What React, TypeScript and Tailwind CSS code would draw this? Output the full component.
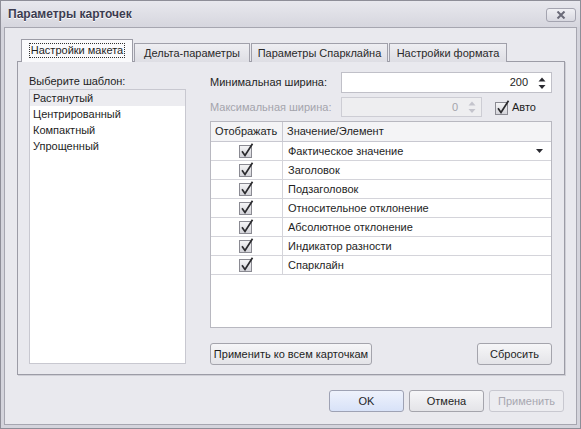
import React from 'react'

const font = { fontFamily: '"Liberation Sans", Arial, sans-serif' }

function CheckMark({ id }: { id: string }) {
  return (
    <svg width="15" height="15" viewBox="0 0 15 15">
      <defs>
        <linearGradient id={id} x1="0" y1="0" x2="0" y2="1">
          <stop offset="0" stopColor="#f6f6f7" />
          <stop offset="1" stopColor="#d2d2d8" />
        </linearGradient>
      </defs>
      <rect x="0.5" y="2.5" width="12" height="12" fill={`url(#${id})`} stroke="#8a8a92" />
      <path d="M3 8.3 L6 12.5 L13.5 0.8" fill="none" stroke="#2b2b2e" strokeWidth="1.7" />
    </svg>
  )
}

function Spinner({ color }: { color: string }) {
  return (
    <svg width="8" height="14" viewBox="0 0 8 14">
      <path d="M4 1.5 L7.5 5.5 H0.5 Z" fill={color} />
      <path d="M0.5 9 H7.5 L4 13 Z" fill={color} />
    </svg>
  )
}

const rows = [
  'Фактическое значение',
  'Заголовок',
  'Подзаголовок',
  'Относительное отклонение',
  'Абсолютное отклонение',
  'Индикатор разности',
  'Спарклайн',
]

const templates = ['Растянутый', 'Центрированный', 'Компактный', 'Упрощенный']

function Button({ children, className = '' }: { children: React.ReactNode; className?: string }) {
  return (
    <div
      className={`h-[22px] flex items-center justify-center rounded-[3px] border border-[#a4a4ac] bg-gradient-to-b from-[#f6f6f8] to-[#e4e4e8] text-[11px] text-[#1e1e1e] ${className}`}
    >
      {children}
    </div>
  )
}

export default function App() {
  return (
    <div
      className="w-[581px] h-[429px] flex flex-col bg-[#d4d4dc] border border-[#8e8e98] overflow-hidden"
      style={font}
    >
      {/* title bar */}
      <div className="h-[26px] flex items-center justify-between pl-[7px] pr-[4px] bg-gradient-to-b from-[#e8e8ee] to-[#d6d6de]">
        <span className="text-[12px] font-bold text-[#3c3c50] [text-shadow:0_1px_0_#ffffff]">Параметры карточек</span>
        <div className="w-[30px] h-[14px] mt-[1px] rounded-[3px] border border-[#a4a4b0] bg-gradient-to-b from-[#f0f0f4] to-[#d8d8e0] flex items-center justify-center">
          <svg width="10" height="8" viewBox="0 0 10 8">
            <path d="M1.5 0.5 L8.5 7.5 M8.5 0.5 L1.5 7.5" stroke="#6a6a78" strokeWidth="2" />
          </svg>
        </div>
      </div>

      {/* client area */}
      <div className="flex-1 mx-[3px] mb-[3px] border border-[#a6a6b0] bg-[#e9e9ee] pl-[12px] pt-[11px] flex flex-col">
        {/* tabs */}
        <div className="flex items-end h-[23px] pl-[4px] relative z-10">
          <div className="h-[23px] w-[112px] border border-b-0 border-[#9c9ca6] bg-[#fafafc] flex items-start justify-center pt-[4px]">
            <span className="text-[11px] text-[#1e1e1e] px-[1px] leading-[13px] outline-1 outline-dotted outline-[#303030]">
              Настройки макета
            </span>
          </div>
          <div className="h-[19px] w-[116px] ml-[1px] border border-b-0 border-[#a0a0aa] bg-gradient-to-b from-[#eeeef2] to-[#dedee4] flex items-center justify-center text-[11px] text-[#2a2a2a]">
            Дельта-параметры
          </div>
          <div className="h-[19px] w-[137px] ml-[1px] border border-b-0 border-[#a0a0aa] bg-gradient-to-b from-[#eeeef2] to-[#dedee4] flex items-center justify-center text-[11px] text-[#2a2a2a]">
            Параметры Спарклайна
          </div>
          <div className="h-[19px] w-[118px] ml-[1px] border border-b-0 border-[#a0a0aa] bg-gradient-to-b from-[#eeeef2] to-[#dedee4] flex items-center justify-center text-[11px] text-[#2a2a2a]">
            Настройки формата
          </div>
        </div>

        {/* tab panel */}
        <div className="-mt-[1px] w-[548px] h-[314px] border border-[#9c9ca6] bg-[#e9e9ee] shadow-[1px_1px_0_#cfcfd6] flex pl-[11px] pt-[10px]">
          {/* left column */}
          <div className="w-[157px] flex flex-col">
            <div className="h-[17px] pt-[1px] text-[11px] text-[#1e1e1e]">Выберите шаблон:</div>
            <div className="w-[157px] h-[275px] border border-[#c8c8d0] bg-white">
              {templates.map((t, i) => (
                <div
                  key={t}
                  className={`h-[16px] pl-[3px] flex items-center text-[11px] text-[#1e1e1e] ${i === 0 ? 'bg-[#ececf0]' : ''}`}
                >
                  {t}
                </div>
              ))}
            </div>
          </div>

          {/* right column */}
          <div className="ml-[24px] w-[343px] flex flex-col">
            <div className="flex items-center h-[21px]">
              <div className="w-[131px] text-[11px] text-[#1e1e1e]">Минимальная ширина:</div>
              <div className="w-[211px] h-[21px] border border-[#c0c0c8] bg-white flex items-center justify-end pr-[5px]">
                <span className="text-[11px] text-[#1e1e1e] mr-[10px]">200</span>
                <Spinner color="#2a2a30" />
              </div>
            </div>
            <div className="flex items-center h-[20px] mt-[4px]">
              <div className="w-[131px] text-[11px] text-[#a4a4ac]">Максимальная ширина:</div>
              <div className="w-[141px] h-[20px] border border-[#cdcdd4] bg-[#eeeef0] flex items-center justify-end pr-[5px]">
                <span className="text-[11px] text-[#a4a4ac] mr-[10px]">0</span>
                <Spinner color="#c4c4cc" />
              </div>
              <div className="ml-[13px] flex items-center">
                <CheckMark id="auto" />
                <span className="ml-[2px] text-[11px] text-[#1e1e1e]">Авто</span>
              </div>
            </div>

            {/* grid */}
            <div className="mt-[4px] w-[342px] h-[207px] border border-[#b8b8c0] bg-white flex flex-col">
              <div className="h-[20px] flex border-b border-[#c8c8d0] bg-[#f4f4f6] text-[11px] text-[#1e1e1e]">
                <div className="w-[72px] border-r border-[#c8c8d0] flex items-center pl-[4px]">Отображать</div>
                <div className="flex-1 flex items-center pl-[4px]">Значение/Элемент</div>
              </div>
              {rows.map((r, i) => (
                <div key={r} className="h-[19px] flex border-b border-[#d4d4da] text-[11px] text-[#1e1e1e]">
                  <div className="w-[72px] border-r border-[#d4d4da] flex items-center justify-center pb-[2px]">
                    <CheckMark id={`cb${i}`} />
                  </div>
                  <div className="flex-1 flex items-center justify-between pl-[5px] pr-[8px]">
                    <span>{r}</span>
                    {i === 0 && (
                      <svg width="7" height="4" viewBox="0 0 7 4">
                        <path d="M0 0 H7 L3.5 4 Z" fill="#2a2a30" />
                      </svg>
                    )}
                  </div>
                </div>
              ))}
            </div>

            <div className="mt-[15px] w-[342px] flex justify-between">
              <Button className="w-[162px]">Применить ко всем карточкам</Button>
              <Button className="w-[75px]">Сбросить</Button>
            </div>
          </div>
        </div>

        {/* dialog buttons */}
        <div className="mt-[15px] w-[547px] flex justify-end gap-[5px]">
          <div className="w-[75px] h-[22px] flex items-center justify-center rounded-[3px] border border-[#9ea2b4] bg-gradient-to-b from-[#eef2fc] to-[#d8e2f8] text-[11px] text-[#1e1e1e]">
            OK
          </div>
          <Button className="w-[75px]">Отмена</Button>
          <div className="w-[75px] h-[22px] flex items-center justify-center rounded-[3px] border border-[#c8c8d0] bg-[#ececf0] text-[11px] text-[#a8a8b0]">
            Применить
          </div>
        </div>
      </div>
    </div>
  )
}
